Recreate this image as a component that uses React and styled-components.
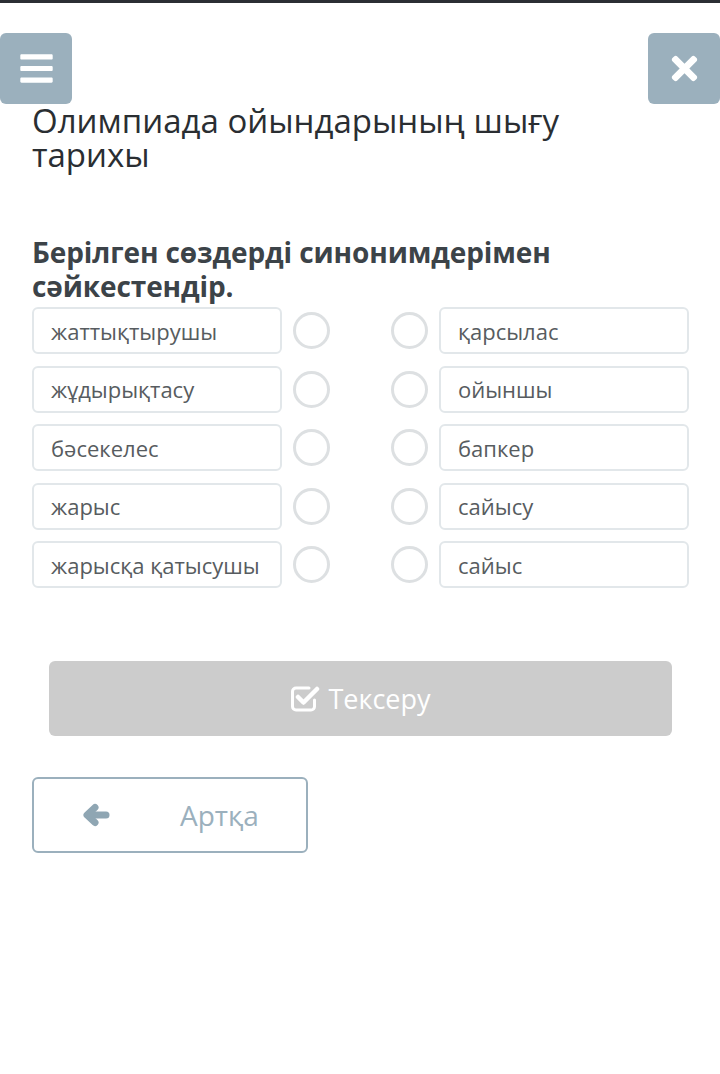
import styled, { createGlobalStyle } from 'styled-components';
import { FaBars, FaTimes } from 'react-icons/fa';

const GlobalStyle = createGlobalStyle`
    body {
        margin: 0;
        background: #ffffff;
        font-family: "Open Sans", "Noto Sans", sans-serif;
    }
`

const left = ['жаттықтырушы', 'жұдырықтасу', 'бәсекелес', 'жарыс', 'жарысқа қатысушы'];
const right = ['қарсылас', 'ойыншы', 'бапкер', 'сайысу', 'сайыс'];

const CheckIcon = () => (
    <svg width="30" height="28" viewBox="0 0 30 28">
        <path
            d="M19 3 H6 A3.5 3.5 0 0 0 2.5 6.5 V21.5 A3.5 3.5 0 0 0 6 25 H21 A3.5 3.5 0 0 0 24.5 21.5 V15"
            fill="none" stroke="#fff" strokeWidth="3" strokeLinecap="round" />
        <path d="M8 12 L13.5 17.5 L27 4" fill="none" stroke="#fff" strokeWidth="4.5"
            strokeLinecap="round" strokeLinejoin="round" />
    </svg>
);

// thick rounded left arrow
const ArrowIcon = () => (
    <svg width="28" height="24" viewBox="0 0 28 24">
        <g fill="none" stroke="#8fa6b3" strokeWidth="7" strokeLinecap="round" strokeLinejoin="round">
            <polyline points="13,4.5 5,12 13,19.5" />
            <line x1="6" y1="12" x2="24" y2="12" />
        </g>
    </svg>
);

const App = () => {
    return (
        <>
            <GlobalStyle />
            <TopBar />
            <Header>
                <SquareButton><FaBars className='icon' /></SquareButton>
                <SquareButton><FaTimes className='icon' /></SquareButton>
            </Header>
            <Content>
                <Title>Олимпиада ойындарының шығу тарихы</Title>
                <Task>Берілген сөздерді синонимдерімен сәйкестендір.</Task>
                <Rows>
                    {left.map((word, i) => (
                        <Row key={word}>
                            <Pair>
                                <Word>{word}</Word>
                                <Ring />
                            </Pair>
                            <Pair>
                                <Ring />
                                <Word>{right[i]}</Word>
                            </Pair>
                        </Row>
                    ))}
                </Rows>
                <CheckButton><CheckIcon /> Тексеру</CheckButton>
                <BackButton>
                    <ArrowIcon />
                    <span>Артқа</span>
                </BackButton>
            </Content>
        </>
    );
};

const TopBar = styled.div`
    height: 3px;
    background: #2b2f34;
`

const Header = styled.div`
    display: flex;
    justify-content: space-between;
    margin-top: 30px;
`

const SquareButton = styled.div`
    width: 72px;
    height: 71px;
    background: #9bb0bd;
    border-radius: 6px;
    display: flex;
    align-items: center;
    justify-content: center;
    .icon {
        color: #ffffff;
        font-size: 37px;
    }
`

const Content = styled.div`
    padding: 0 31px 0 32px;
`

const Title = styled.h1`
    margin: 0;
    padding-right: 40px;
    font-weight: 400;
    font-size: 33px;
    line-height: 34px;
    color: #2a2e32;
`

const Task = styled.h2`
    margin: 63px 0 0;
    font-weight: 700;
    font-size: 28px;
    line-height: 34px;
    color: #3c4348;
    letter-spacing: -0.1px;
`

const Rows = styled.div`
    display: flex;
    flex-direction: column;
    gap: 11.5px;
    margin-top: 4px;
`

const Row = styled.div`
    display: flex;
    justify-content: space-between;
    align-items: center;
`

const Pair = styled.div`
    display: flex;
    align-items: center;
    gap: 11px;
`

const Word = styled.div`
    width: 250px;
    height: 47px;
    box-sizing: border-box;
    border: 2px solid #e2e7ea;
    border-radius: 6px;
    padding: 0 17px;
    display: flex;
    align-items: center;
    font-size: 22px;
    color: #575c60;
    white-space: nowrap;
    overflow: hidden;
`

const Ring = styled.div`
    width: 37px;
    height: 37px;
    box-sizing: border-box;
    border: 3px solid #dde0e2;
    border-radius: 50%;
`

const CheckButton = styled.div`
    margin: 73px 17px 0 17px;
    height: 75px;
    background: #cccccc;
    border-radius: 6px;
    display: flex;
    align-items: center;
    justify-content: center;
    gap: 8px;
    color: #ffffff;
    font-size: 27px;
`

const BackButton = styled.div`
    margin-top: 41px;
    width: 276px;
    height: 76px;
    box-sizing: border-box;
    border: 2px solid #9bb0bd;
    border-radius: 6px;
    display: flex;
    align-items: center;
    gap: 70px;
    padding-left: 48px;
    color: #9bb0bd;
    font-size: 28px;
`

export default App;
